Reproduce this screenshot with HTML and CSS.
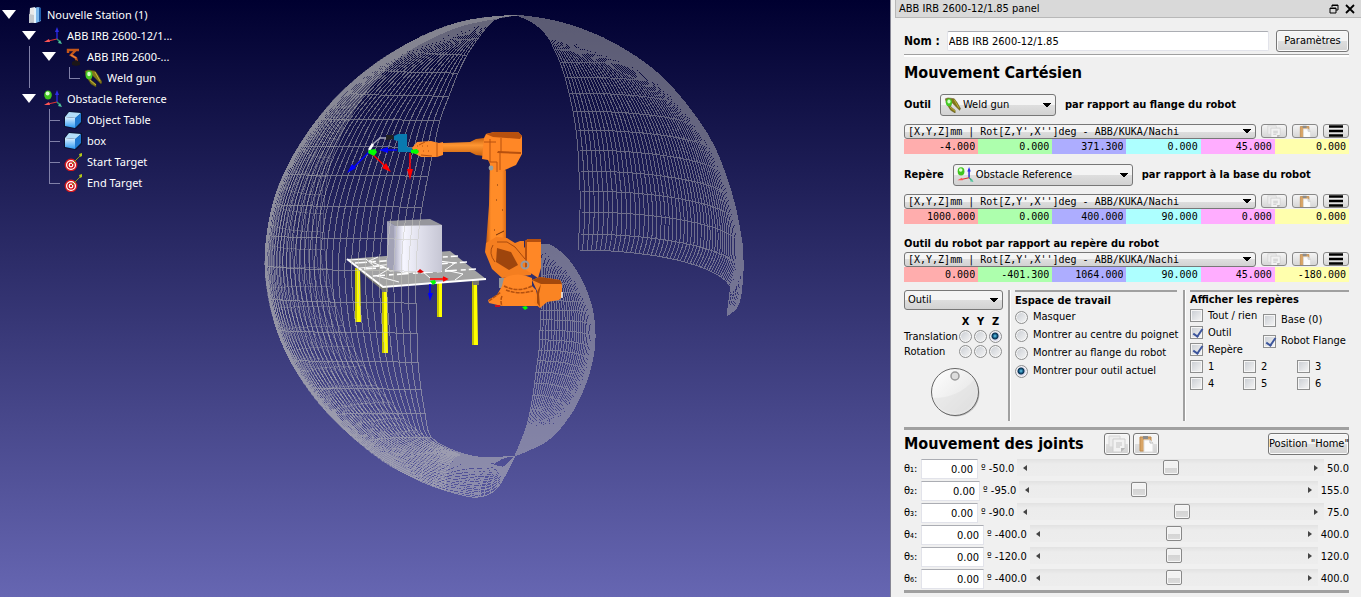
FILE: index.html
```html
<!DOCTYPE html>
<html lang="fr">

<head>
    <meta charset="UTF-8">
    <meta name="viewport" content="width=device-width, initial-scale=1.0">
    <title>Station</title>
    <link rel="stylesheet" href="styles.css">
    <script src="scene.js" defer></script>
</head>

<body>
    <!-- shared icons -->
    <svg class="sprite" aria-hidden="true">
        <defs>
            <linearGradient id="cubeFill" x1="0" y1="0" x2="0" y2="1">
                <stop offset="0" stop-color="#dff2ff" />
                <stop offset="1" stop-color="#2d9bf5" />
            </linearGradient>
            <linearGradient id="dialFill" x1="0" y1="0" x2="1" y2="1">
                <stop offset="0" stop-color="#fff" />
                <stop offset="1" stop-color="#dedede" />
            </linearGradient>
            <linearGradient id="boxFill" x1="0" y1="0" x2="1" y2="0">
                <stop offset="0" stop-color="#aeaec4" />
                <stop offset=".2" stop-color="#f6f6ff" />
                <stop offset=".5" stop-color="#e2e2ee" />
                <stop offset="1" stop-color="#c6c6d4" />
            </linearGradient>
            <linearGradient id="armFill" x1="0" y1="0" x2="1" y2="0">
                <stop offset="0" stop-color="#c05a12" />
                <stop offset=".25" stop-color="#ff8c28" />
                <stop offset=".8" stop-color="#ff8c28" />
                <stop offset="1" stop-color="#d96c18" />
            </linearGradient>
            <linearGradient id="foreFill" x1="0" y1="0" x2="0" y2="1">
                <stop offset="0" stop-color="#c9620f" />
                <stop offset=".4" stop-color="#ff9632" />
                <stop offset="1" stop-color="#c9620f" />
            </linearGradient>
        </defs>
        <symbol id="station" viewBox="0 0 18 18">
            <path d="M6 2l5-1v15l-6 1z" fill="#e8e8e8" />
            <path d="M5 8l5 1v8l-5-1z" fill="#c4c8cc" />
            <path d="M10 2l4-1 3 1v13l-5 2h-2z" fill="#7db8ec" />
            <path d="M10 2l2 0v15h-2z" fill="#e3f2fc" />
            <path d="M15 2l2 0v12l-2 2z" fill="#1d5ba8" />
        </symbol>
        <symbol id="frame" viewBox="0 0 18 18">
            <path d="M13 12V3" stroke="#2424c8" stroke-width="1.6" />
            <path d="M13 0l2 5h-4z" fill="#2d2de6" />
            <path d="M13 12L4 14" stroke="#d33" stroke-width="1.2" />
            <path d="M0 15l5-3 1 3z" fill="#f55" />
            <path d="M13 12l3 3" stroke="#2a9a70" stroke-width="1.4" />
            <path d="M18 17l-4-1 2-3z" fill="#4fc49b" />
        </symbol>
        <symbol id="ball" viewBox="0 0 18 18">
            <ellipse cx="4" cy="5" rx="3.8" ry="4.6" fill="#3fc51e" />
            <ellipse cx="3.6" cy="3.4" rx="2" ry="2" fill="#dcffd0" />
        </symbol>
        <symbol id="robot" viewBox="0 0 18 18">
            <path d="M4 5V2h11M12 2L7 7l5 3 1 4" fill="none" stroke="#c4561a" stroke-width="2.4" />
            <path d="M7 7l5 3" fill="none" stroke="#ef8740" stroke-width="1.2" />
            <path d="M8 14l4-2 4 2v3l-4 1-4-1z" fill="#1b1618" />
        </symbol>
        <symbol id="gun" viewBox="0 0 18 18">
            <path d="M1 2l3-1 7 1 3 4 4 7-1 2-6-6-3-3-1 5 5 4v3l-5-3-5-8z" fill="#80751a" stroke="#4f4810" stroke-width=".5" />
            <path d="M11 3l5 9M6 11l6 5" stroke="#c4b63a" stroke-width="1" />
            <ellipse cx="5" cy="6" rx="3.4" ry="4.4" fill="#43cb25" />
            <ellipse cx="5" cy="5" rx="1.8" ry="2.2" fill="#d6ffc9" />
        </symbol>
        <symbol id="cube" viewBox="0 0 18 18">
            <path d="M5 0l13 1v11l-6 6-12-2V6z" fill="#0b1230" />
            <path d="M5 1l12 1-5 5L1 6z" fill="#b4def9" />
            <path d="M1 6l10 1v10L1 15z" fill="url(#cubeFill)" />
            <path d="M17 2v9l-6 6V7z" fill="#2079cf" />
        </symbol>
        <symbol id="target" viewBox="0 0 18 18">
            <circle cx="7" cy="12" r="6.4" fill="#d3181e" />
            <circle cx="7" cy="12" r="4.4" fill="none" stroke="#fff" stroke-width="1.2" />
            <circle cx="7" cy="12" r="1.8" fill="none" stroke="#fff" stroke-width="1.2" />
            <path d="M8 11l8-8" stroke="#8b9c18" stroke-width="1" />
            <path d="M15 1l3-1v3l-2 1z" fill="#b3c719" />
        </symbol>
        <symbol id="copy" viewBox="0 0 20 18">
            <path d="M2 1h11v11H2z" fill="#ececec" stroke="#d6d6d6" />
            <path d="M6 4h12v9l-4 4H6z" fill="#f2f2f2" stroke="#cfcfcf" />
            <path d="M9 8h6M9 10h6M9 12h4" stroke="#c4c4c4" />
            <path d="M18 13l-4 4v-4z" fill="#b8b8b8" />
        </symbol>
        <symbol id="paste" viewBox="0 0 20 18">
            <path d="M4 2h11v14H4z" fill="#d9a566" stroke="#bd894c" />
            <path d="M7 1h5v3H7z" fill="#8c8c8c" />
            <path d="M8 5h6l3 3v9H8z" fill="#fcfcfc" stroke="#ddd" />
            <path d="M14 5v3h3" fill="none" stroke="#bbb" />
        </symbol>
        <symbol id="bars" viewBox="0 0 14 12">
            <path d="M0 1.500h14M0 6h14M0 10.500h14" stroke="#000" stroke-width="2.6" />
        </symbol>
        <symbol id="caret" viewBox="0 0 14 9">
            <path d="M0 0h14L7 9z" fill="#fff" />
        </symbol>
    </svg>

    <div class="app">
        <main class="view">
            <!-- 3D view -->
            <svg class="scene" viewBox="0 0 890 597" preserveAspectRatio="xMidYMid meet" role="img" aria-label="Robot">
                <path id="meshRight" class="mesh" />
                <path id="meshInner" class="mesh mesh-inner" />
                <path id="meshBack" class="mesh mesh-back" />

                <!-- table -->
                <g class="table3d">
                    <path d="M355 268h5l1 54h-6zM382 290h5l1 63h-6zM437 282h5v35h-5zM472 281h5l1 64h-6z" fill="#ff0" />
                    <path d="M356 268v54M383 290v63M438 282v35M473 281v64" stroke="#8d8d00" fill="none" />
                    <path d="M381 286h7v6h-6zM472 280h7v5h-6zM349 262l33 25v3z" fill="#77776f" />
                    <path d="M347 259l103-8 36 28-103 8z" fill="#a3a3a3" />
                    <path d="M355 263l103-7M364 269l103-7M373 276l103-7" stroke="#fff" stroke-dasharray="12 4 5 3" stroke-width="1.6" />
                    <path d="M348 260l18-1 8 7 20-2 8 9 20-2 8 7M378 257l-9 4 20 8-12 7 22 6M440 253l-9 7 24 3-10 7 18 4-8 6M360 268l22-2 8 5 25-2" stroke="#fff" fill="none" />
                    <path d="M347 259l36 28 103-8" stroke="#fff" fill="none" stroke-width="2" />
                </g>
                <!-- box -->
                <path d="M387 221l43-2 12 6-45 2z" fill="#96969c" />
                <path d="M387 221l9 5v46l-9-5z" fill="#a2a2b6" />
                <path d="M394 226l48-1v44l-1 3h-38l-9-1z" fill="url(#boxFill)" />

                <path id="meshLeft" class="mesh mesh-left" />

                <!-- robot arm -->
                <g>
                    <path d="M490 158l11 5 5 8v69l-4 10-16-5 3-40z" fill="url(#armFill)" />
                    <path d="M443 143l27-1 6-3 8-1v18l-8-1-6-3h-27z" fill="url(#foreFill)" />
                    <path d="M484 138l2-4 8-2h24l4 4v18l-6 11-16 7-8-4-4-8-6-1z" fill="#ff8726" />
                    <path d="M486 134l8-2h24l4 4-2 3-27-2zM498 151l23 1v2l-24-1z" fill="#b7500e" />
                    <path d="M501 138v14M490 139v23M484 142h12M489 162h8v10M500 152v18" stroke="#b7500e" fill="none" />
                    <path d="M412 148l5-6 14-1 8 2 4-1v13l-6 2h-16l-7-4z" fill="#ff8d2d" />
                    <path d="M437 143v14M425 142l-6 3M421 155l11 1" stroke="#b7500e" fill="none" />
                    <path d="M417 146h11M418 151h11" stroke="#b7500e" stroke-dasharray="1 4" fill="none" />
                    <path d="M497 185h1M496 200h1M502 210h1M494 230h1M496 235l8-4" stroke="#70300a" fill="none" />
                    <circle cx="491" cy="168" r="2.400" fill="#92a0a5" />

                    <path d="M486 243l10-6 11 1 8 5 5-2h4v6l9 8-2 20-29 3-10-9-7-17z" fill="#f47e20" />
                    <path d="M497 248l14 4 7 13-9 5-13-8z" fill="#9e450d" />
                    <path d="M493 245q-5 8 2 17M497 242l10 0 8 5 10 12" stroke="#a94a0d" fill="none" />
                    <path d="M525 241l3-2h12l1 2v27l-3 10-12-8z" fill="#ff8726" />
                    <path d="M525 241l3-2h13v3h-14v26h-2z" fill="#b7500e" />
                    <path d="M499 278h5v10h-5z" fill="#90949a" />
                    <path d="M504 278q14-7 28 0v8l4 4 2 16h-36l-13-3-1-3 9-5 5-9z" fill="#ff8726" />
                    <path d="M504 286q14 7 28 0M506 290q12 5 27 1M489 301l12-9M502 296q-2 5 0 10" stroke="#b3500f" stroke-width="1.5" stroke-dasharray="4 1" fill="none" />
                    <path d="M532 280l8-3 20 3 2 5v12l-3 3-12 2-7 6-6-5 3-12z" fill="#fa8423" />
                    <path d="M532 280l8-3 20 3 2 4-21 0zM541 284l-4 8v11l3 4-1-13z" fill="#a4480c" />
                    <circle cx="525" cy="265" r="3.500" fill="none" stroke="#969aa0" stroke-width="2" />
                    <path d="M562 292v6" stroke="#eee" stroke-width="1.500" />
                </g>

                <!-- welding tool -->
                <path d="M370 150l3-6 7-6h7" stroke="#a8a8bc" stroke-width="1.500" fill="none" />
                <path d="M369 150l4-6" stroke="#fff" stroke-width="2.500" />
                <path d="M386 135h7l1 4-8 1z" fill="#222" />
                <path d="M394 136l4-2h9v13l5 1v4h-14v-11l-4-1z" fill="#097ab0" />

                <!-- frames -->
                <g stroke-width="1.500">
                    <path d="M369 152l-18 18M397 150h-11" stroke="#00f" />
                    <path d="M347 173l5-9 4 4zM379 150l9-3v6z" fill="#00f" />
                    <path d="M370 152l16 15M410 153v18" stroke="#f00" />
                    <path d="M391 172l-9-4 4-5zM410 180l-3-11h6z" fill="#f00" />
                    <path d="M369 150l6-1 2 3-3 4-6-3zM411 150l6-1 2 3-2 2-6-1zM430 281l5-1 1 3-3 2zM522 307l4-1 2 2-3 2z" fill="#0f0" />
                    <path d="M430 279h16M443 277l4 2-4 2M495 306h5" stroke="#f00" fill="#f00" />
                    <path d="M417 272l3-3 4 3-3 1z" fill="#d00" />
                    <path d="M430 284v12" stroke="#00f" />
                    <path d="M430 301l-2-8h5z" fill="#00f" />
                </g>
            </svg>

            <!-- station tree -->
            <ul class="tree">
                <li>
                    <div class="node"><svg class="caret"><use href="#caret" /></svg><svg class="icon"><use href="#station" /></svg><span>Nouvelle Station (1)</span></div>
                    <ul>
                        <li class="open">
                            <div class="node"><svg class="caret"><use href="#caret" /></svg><svg class="icon"><use href="#frame" /></svg><span>ABB IRB 2600-12/1...</span></div>
                            <ul>
                                <li>
                                    <div class="node"><svg class="caret"><use href="#caret" /></svg><svg class="icon"><use href="#robot" /></svg><span>ABB IRB 2600-...</span></div>
                                    <ul>
                                        <li class="leaf">
                                            <div class="node"><svg class="icon"><use href="#gun" /></svg><span>Weld gun</span></div>
                                        </li>
                                    </ul>
                                </li>
                            </ul>
                        </li>
                        <li>
                            <div class="node"><svg class="caret"><use href="#caret" /></svg><svg class="icon"><use href="#frame" /><use href="#ball" /></svg><span>Obstacle Reference</span></div>
                            <ul>
                                <li class="leaf"><div class="node"><svg class="icon"><use href="#cube" /></svg><span>Object Table</span></div></li>
                                <li class="leaf"><div class="node"><svg class="icon"><use href="#cube" /></svg><span>box</span></div></li>
                                <li class="leaf"><div class="node"><svg class="icon"><use href="#target" /></svg><span>Start Target</span></div></li>
                                <li class="leaf"><div class="node"><svg class="icon"><use href="#target" /></svg><span>End Target</span></div></li>
                            </ul>
                        </li>
                    </ul>
                </li>
            </ul>
        </main>

        <aside class="panel">
            <header class="title">
                <span>ABB IRB 2600-12/1.85 panel</span>
                <button type="button" aria-label="Détacher"><svg viewBox="0 0 10 10"><path d="M3 3V1h6v5H7M3 1.500h6M1 4h6v5H1zM1 4.500h6" fill="none" stroke="#000" /></svg></button>
                <button type="button" aria-label="Fermer"><svg viewBox="0 0 10 10"><path d="M1 1l8 8M9 1L1 9" stroke="#000" stroke-width="1.800" /></svg></button>
            </header>

            <div class="content">
                <div class="name-row">
                    <label class="strong" for="nom">Nom :</label>
                    <input id="nom" class="name" type="text" value="ABB IRB 2600-12/1.85">
                    <button class="btn" type="button">Paramètres</button>
                </div>

                <h2 class="cartesian">Mouvement Cartésien</h2>

                <div class="ref-row">
                    <label for="outil">Outil</label>
                    <span class="combo tool"><svg class="icon"><use href="#gun" /></svg><select id="outil"><option>Weld gun</option></select></span>
                    <span class="about">par rapport au flange du robot</span>
                </div>
                <div class="pose">
                    <div class="pose-head">
                        <select aria-label="Format outil"><option>[X,Y,Z]mm | Rot[Z,Y',X'']deg - ABB/KUKA/Nachi</option></select>
                        <button type="button" aria-label="Copier"><svg><use href="#copy" /></svg></button>
                        <button type="button" aria-label="Coller"><svg><use href="#paste" /></svg></button>
                        <button type="button" aria-label="Menu"><svg class="bars"><use href="#bars" /></svg></button>
                    </div>
                    <div class="values">
                        <input aria-label="X" value="-4.000"><input aria-label="Y" value="0.000"><input aria-label="Z" value="371.300"><input aria-label="Rot Z" value="0.000"><input aria-label="Rot Y" value="45.000"><input aria-label="Rot X" value="0.000">
                    </div>
                </div>

                <div class="ref-row">
                    <label for="repere">Repère</label>
                    <span class="combo reference"><svg class="icon"><use href="#frame" /><use href="#ball" /></svg><select id="repere"><option>Obstacle Reference</option></select></span>
                    <span class="about">par rapport à la base du robot</span>
                </div>
                <div class="pose">
                    <div class="pose-head">
                        <select aria-label="Format repère"><option>[X,Y,Z]mm | Rot[Z,Y',X'']deg - ABB/KUKA/Nachi</option></select>
                        <button type="button" aria-label="Copier"><svg><use href="#copy" /></svg></button>
                        <button type="button" aria-label="Coller"><svg><use href="#paste" /></svg></button>
                        <button type="button" aria-label="Menu"><svg class="bars"><use href="#bars" /></svg></button>
                    </div>
                    <div class="values">
                        <input aria-label="X" value="1000.000"><input aria-label="Y" value="0.000"><input aria-label="Z" value="400.000"><input aria-label="Rot Z" value="90.000"><input aria-label="Rot Y" value="0.000"><input aria-label="Rot X" value="0.000">
                    </div>
                </div>

                <h3 class="relative">Outil du robot par rapport au repère du robot</h3>
                <div class="pose">
                    <div class="pose-head">
                        <select aria-label="Format robot"><option>[X,Y,Z]mm | Rot[Z,Y',X'']deg - ABB/KUKA/Nachi</option></select>
                        <button type="button" aria-label="Copier"><svg><use href="#copy" /></svg></button>
                        <button type="button" aria-label="Coller"><svg><use href="#paste" /></svg></button>
                        <button type="button" aria-label="Menu"><svg class="bars"><use href="#bars" /></svg></button>
                    </div>
                    <div class="values">
                        <input aria-label="X" value="0.000"><input aria-label="Y" value="-401.300"><input aria-label="Z" value="1064.000"><input aria-label="Rot Z" value="90.000"><input aria-label="Rot Y" value="45.000"><input aria-label="Rot X" value="-180.000">
                    </div>
                </div>

                <div class="options">
                    <div class="jog">
                        <select aria-label="Déplacer"><option>Outil</option></select>
                        <div class="axes">
                            <span></span><b>X</b><b>Y</b><b>Z</b>
                            <span>Translation</span>
                            <input type="radio" name="axis" aria-label="Translation X"><input type="radio" name="axis" aria-label="Translation Y"><input type="radio" name="axis" aria-label="Translation Z" checked>
                            <span>Rotation</span>
                            <input type="radio" name="axis" aria-label="Rotation X"><input type="radio" name="axis" aria-label="Rotation Y"><input type="radio" name="axis" aria-label="Rotation Z">
                        </div>
                        <svg class="dial" viewBox="0 0 50 50">
                            <circle cx="26" cy="26" r="23.500" fill="#bbb" />
                            <circle cx="25" cy="25" r="23.500" fill="url(#dialFill)" stroke="#666" />
                            <path d="M3 31Q28 31 44 13A22 22 0 0 1 4 34z" fill="#ddd" opacity=".4" />
                            <circle cx="25" cy="9" r="4" fill="#ddd" stroke="#999" stroke-width="1.500" />
                        </svg>
                    </div>
                    <fieldset class="workspace">
                        <legend>Espace de travail</legend>
                        <label><input type="radio" name="space">Masquer</label>
                        <label><input type="radio" name="space">Montrer au centre du poignet</label>
                        <label><input type="radio" name="space">Montrer au flange du robot</label>
                        <label><input type="radio" name="space" checked>Montrer pour outil actuel</label>
                    </fieldset>
                    <fieldset class="frames">
                        <legend>Afficher les repères</legend>
                        <div class="named">
                            <div>
                                <label><input type="checkbox">Tout / rien</label>
                                <label><input type="checkbox" checked>Outil</label>
                                <label><input type="checkbox" checked>Repère</label>
                            </div>
                            <div class="bases">
                                <label><input type="checkbox">Base (0)</label>
                                <label><input type="checkbox" checked>Robot Flange</label>
                            </div>
                        </div>
                        <div class="numbered">
                            <label><input type="checkbox">1</label><label><input type="checkbox">2</label><label><input type="checkbox">3</label>
                            <label><input type="checkbox">4</label><label><input type="checkbox">5</label><label><input type="checkbox">6</label>
                        </div>
                    </fieldset>
                </div>

                <section class="joints">
                    <div class="joints-head">
                        <h2>Mouvement des joints</h2>
                        <button class="btn square" type="button" aria-label="Copier"><svg><use href="#copy" /></svg></button>
                        <button class="btn square" type="button" aria-label="Coller"><svg><use href="#paste" /></svg></button>
                        <button class="btn home" type="button">Position "Home"</button>
                    </div>
                    <div class="joint"><label for="j1">θ₁:</label><input id="j1" class="angle" value="0.00"><span>º -50.0</span><div class="slider"><input type="range" min="-50" max="50" value="0" aria-label="θ₁"></div><span>50.0</span></div>
                    <div class="joint"><label for="j2">θ₂:</label><input id="j2" class="angle mid" value="0.00"><span>º -95.0</span><div class="slider"><input type="range" min="-95" max="155" value="0" aria-label="θ₂"></div><span>155.0</span></div>
                    <div class="joint"><label for="j3">θ₃:</label><input id="j3" class="angle" value="0.00"><span>º -90.0</span><div class="slider"><input type="range" min="-90" max="75" value="0" aria-label="θ₃"></div><span>75.0</span></div>
                    <div class="joint"><label for="j4">θ₄:</label><input id="j4" class="angle wide" value="0.00"><span>º -400.0</span><div class="slider"><input type="range" min="-400" max="400" value="0" aria-label="θ₄"></div><span>400.0</span></div>
                    <div class="joint"><label for="j5">θ₅:</label><input id="j5" class="angle wide" value="0.00"><span>º -120.0</span><div class="slider"><input type="range" min="-120" max="120" value="0" aria-label="θ₅"></div><span>120.0</span></div>
                    <div class="joint"><label for="j6">θ₆:</label><input id="j6" class="angle wide" value="0.00"><span>º -400.0</span><div class="slider"><input type="range" min="-400" max="400" value="0" aria-label="θ₆"></div><span>400.0</span></div>
                </section>
            </div>
        </aside>
    </div>
</body>

</html>
```

FILE: styles.css
```css
* {
    box-sizing: border-box;
    margin: 0;
    padding: 0;
}

body {
    font-family: "DejaVu Sans Condensed", "Open Sans", sans-serif;
    font-size: 11px;
    line-height: 14px;
    color: #000;
}

input,
select,
button {
    font: inherit;
    color: inherit;
}

ul {
    list-style: none;
}

.sprite {
    position: absolute;
    width: 0;
    height: 0;
}

.app {
    display: flex;
    min-height: 100vh;
}

/* 3D view */
.view {
    flex: 1;
    min-width: 0;
    display: grid;
    background: linear-gradient(#000030, #6666b2);
}

.scene {
    grid-area: 1 / 1;
    width: 100%;
    height: 100%;
}

.mesh {
    fill: none;
    stroke: #c8c8c0;
    stroke-opacity: 0.45;
    stroke-width: 1;
    shape-rendering: crispEdges;
}

.mesh-left {
    stroke-opacity: 0.5;
}

.mesh-back {
    stroke-opacity: 0.3;
}

/* tree */
.tree {
    grid-area: 1 / 1;
    z-index: 1;
    justify-self: start;
    align-self: start;
    padding: 4px 0 0 2px;
    font-family: "Noto Sans", sans-serif;
    color: #fff;
}

.tree ul {
    padding-left: 20px;
}

.tree li {
    position: relative;
}

.node {
    display: flex;
    align-items: center;
    height: 21px;
}

.node .caret {
    width: 14px;
    height: 9px;
    margin-right: 8px;
}

.node .icon {
    width: 18px;
    height: 18px;
    margin-right: 5px;
}

.leaf .node {
    padding-left: 22px;
}

.leaf::before {
    content: "";
    position: absolute;
    left: 7px;
    top: 0;
    width: 10px;
    height: 11px;
    border: solid #8080a8;
    border-width: 0 0 1px 1px;
}

.leaf:not(:last-child)::after,
.open::after {
    content: "";
    position: absolute;
    left: 7px;
    top: 0;
    bottom: 0;
    width: 1px;
    background: #8080a8;
}

.open::after {
    top: 21px;
}

/* panel */
.panel {
    width: 471px;
    background: #f0f0f0;
    border-left: 1px solid #868694;
    padding-left: 4px;
}

.title {
    display: flex;
    align-items: center;
    gap: 5px;
    height: 18px;
    padding: 1px 5px 0 3px;
    background: #d9d9d9;
    border: solid #b8b8b8;
    border-width: 0 0 1px 1px;
}

.title span {
    flex: 1;
}

.title button {
    width: 11px;
    height: 12px;
    border: 0;
    background: none;
}

.title svg {
    display: block;
    width: 10px;
    height: 10px;
}

.content {
    padding: 12px 12px 0 9px;
}

.btn {
    height: 22px;
    border: 1px solid #777;
    border-radius: 3px;
    background: linear-gradient(#f4f4f4 50%, #dedede 50%, #d2d2d2);
    box-shadow: inset 0 0 0 1px #fafafa;
    white-space: nowrap;
}

.name-row {
    display: flex;
    align-items: center;
    gap: 7px;
    padding-bottom: 2px;
    border-bottom: 1px solid #a0a0a0;
    box-shadow: 0 2px #fff;
}

.name-row .btn {
    width: 73px;
}

.strong {
    font-size: 12px;
    font-weight: bold;
}

.name {
    flex: 1;
    min-width: 0;
    height: 20px;
    padding: 0 1px;
    border: 1px solid #e2e3ea;
    border-top-color: #abadb3;
    border-radius: 2px;
    background: #fff;
}

h2 {
    font-size: 16px;
    line-height: 20px;
}

.cartesian {
    margin: 8px 0 11px;
}

select {
    appearance: none;
    width: 100%;
    padding: 0 14px 0 3px;
    border: 1px solid #777;
    border-radius: 3px;
    background:
        linear-gradient(to bottom right, #000 50%, transparent 50%) right 4px center / 4px 5px no-repeat,
        linear-gradient(to bottom left, #000 50%, transparent 50%) right 8px center / 4px 5px no-repeat,
        linear-gradient(#f4f4f4 50%, #dedede 50%, #d2d2d2);
    overflow: hidden;
}

.ref-row {
    display: flex;
    align-items: center;
    gap: 9px;
    height: 22px;
    font-weight: bold;
}

.combo {
    position: relative;
    font-weight: normal;
}

.combo.tool {
    width: 116px;
}

.combo.reference {
    width: 180px;
}

.combo select {
    height: 22px;
    padding-left: 22px;
}

.combo .icon {
    position: absolute;
    left: 4px;
    top: 3px;
    width: 17px;
    height: 16px;
}

.pose {
    margin: 8px 0 10px;
}

.pose-head {
    display: flex;
    gap: 5px;
    height: 15px;
}

.pose-head select {
    flex: 1;
    min-width: 0;
    height: 15px;
    line-height: 13px;
    font-family: "DejaVu Sans Mono", monospace;
    font-size: 10px;
}

.pose-head button {
    width: 26px;
    height: 14px;
    border: 1px solid #888;
    border-radius: 3px;
    background: linear-gradient(#f4f4f4, #d6d6d6);
    overflow: hidden;
}

.pose-head svg {
    display: block;
    width: 20px;
    height: 14px;
    margin: 0 auto;
}

.pose-head .bars {
    width: 14px;
    height: 12px;
}

.values {
    display: grid;
    grid-template-columns: repeat(6, 1fr);
}

.values input {
    min-width: 0;
    height: 15px;
    padding-right: 3px;
    border: 0;
    background: #ffadad;
    font-family: "DejaVu Sans Mono", monospace;
    font-size: 10px;
    text-align: right;
}

.values input:nth-child(2) {
    background: #adffad;
}

.values input:nth-child(3) {
    background: #adadff;
}

.values input:nth-child(4) {
    background: #adffff;
}

.values input:nth-child(5) {
    background: #ffadff;
}

.values input:nth-child(6) {
    background: #ffffad;
}

.relative {
    font-size: 11px;
    margin: 13px 0 -7px;
}

/* jog, workspace, frames */
.options {
    display: flex;
    height: 131px;
    margin-top: -2px;
}

.options select {
    height: 20px;
}

.jog {
    width: 99px;
}

.axes {
    display: grid;
    grid-template-columns: 54px repeat(3, 15px);
    grid-template-rows: 15px 15px 15px;
    align-items: center;
    margin-top: 4px;
}

.axes b {
    text-align: center;
}

input[type="radio"],
input[type="checkbox"] {
    appearance: none;
    flex: none;
    width: 13px;
    height: 13px;
    border: 1px solid #8e8f8f;
    box-shadow: inset 0 0 0 1px #f6f6f6;
    background: linear-gradient(135deg, #c8ccd2, #f6f6f6);
}

input[type="radio"] {
    border-radius: 50%;
}

input[type="radio"]:checked {
    background: radial-gradient(circle at 5px 5px, #6cd0f0 0, #135a85 2px, #0b2f4c 3px, transparent 4px), #dde;
}

input[type="checkbox"]:checked {
    position: relative;
}

input[type="checkbox"]:checked::after {
    content: "";
    position: absolute;
    left: 4px;
    top: 0;
    width: 4px;
    height: 8px;
    border: solid #3c559c;
    border-width: 0 2px 2px 0;
    transform: rotate(35deg);
}

.axes input {
    justify-self: center;
}

.dial {
    display: block;
    width: 50px;
    height: 50px;
    margin: 8px 0 0 26px;
}

fieldset {
    border: solid #a0a0a0;
    border-width: 0 0 0 2px;
    box-shadow: inset 1px 0 #fff;
    padding-left: 5px;
    min-width: 0;
}

.workspace {
    width: 175px;
    margin-left: 5px;
}

.frames {
    flex: 1;
}

legend {
    float: left;
    width: 162px;
    padding-top: 2px;
    border-top: 2px solid #a0a0a0;
    font-weight: bold;
    font-size: 11px;
    line-height: 14px;
}

.frames legend {
    width: 100%;
    padding-top: 1px;
}

fieldset label {
    display: flex;
    align-items: center;
    gap: 5px;
    height: 17px;
    white-space: nowrap;
}

.workspace label {
    clear: both;
    height: 18px;
}

.named {
    clear: both;
    display: flex;
}

.named > div {
    width: 73px;
}

.bases {
    padding-top: 3px;
}

.bases label {
    height: 22px;
}

.bases label:first-child {
    height: 20px;
}

.numbered {
    display: grid;
    grid-template-columns: 53px 54px 1fr;
}

/* joints */
.joints {
    margin-top: 6px;
    border: solid #a0a0a0;
    border-width: 3px 0;
}

.joints-head {
    display: flex;
    align-items: center;
    gap: 3px;
    height: 28px;
}

.joints-head h2 {
    width: 197px;
}

.square {
    width: 26px;
}

.square svg {
    display: block;
    width: 20px;
    height: 18px;
    margin: 0 auto;
}

.home {
    margin-left: auto;
    width: 81px;
}

.joint {
    display: flex;
    align-items: center;
    gap: 3px;
    height: 22px;
}

.joint label {
    width: 14px;
    white-space: nowrap;
}

.angle {
    width: 57px;
    height: 20px;
    padding-right: 4px;
    border: 1px solid #e2e3ea;
    border-top-color: #abadb3;
    background: #fff;
    text-align: right;
}

.angle.mid {
    width: 59px;
}

.angle.wide {
    width: 63px;
}

.slider {
    flex: 1;
    min-width: 0;
    height: 17px;
    margin-bottom: 3px;
    display: flex;
    align-items: center;
    background: linear-gradient(#e2e2e2, #ececec 30%, #ededed);
}

.slider::before,
.slider::after {
    content: "";
    margin: 0 7px 0 6px;
    border: solid transparent;
    border-width: 3px 4px 3px 0;
    border-right-color: #444;
}

.slider::after {
    margin: 0 6px 0 7px;
    border-width: 3px 0 3px 4px;
    border-left-color: #444;
}

.slider input {
    appearance: none;
    flex: 1;
    min-width: 0;
    height: 16px;
    background: none;
}

.slider input::-webkit-slider-thumb {
    appearance: none;
    width: 16px;
    height: 15px;
    border: 1px solid #888;
    border-radius: 2px;
    background: linear-gradient(#f2f2f2 50%, #d4d4d4 50%, #dcdcdc);
    box-shadow: inset 0 0 0 1px #f6f6f6;
}
```

FILE: scene.js
```js
// reads "x,y x,y ..." into a list of points
function points(text) {
    return text.split(" ").map(function (p) {
        return p.split(",").map(Number);
    });
}

// point at position t (0..1) on a smooth curve through the list
function at(list, t) {
    var n = list.length - 1;
    var i = Math.min(Math.floor(t * n), n - 1);
    var f = t * n - i;
    var a = list[Math.max(i - 1, 0)];
    var b = list[i];
    var c = list[i + 1];
    var d = list[Math.min(i + 2, n)];
    return [0, 1].map(function (k) {
        return 0.5 * (2 * b[k] + (c[k] - a[k]) * f +
            (2 * a[k] - 5 * b[k] + 4 * c[k] - d[k]) * f * f +
            (3 * b[k] - a[k] - 3 * c[k] + d[k]) * f * f * f);
    });
}

// wire mesh between an open edge and the silhouette
function mesh(edge, outline, cols, sub) {
    var d = "";
    var rows = (edge.length - 1) * sub;

    function surface(u, v) {
        var a = at(edge, u);
        var b = at(outline, u);
        var angle = v * Math.PI / 2;
        return (a[0] + (b[0] - a[0]) * Math.sin(angle)).toFixed(1) + " " +
            (a[1] + (b[1] - a[1]) * (1 - Math.cos(angle))).toFixed(1);
    }

    for (var c = 0; c <= cols; c++) {
        for (var i = 0; i <= 60; i++) {
            d += (i ? "L" : "M") + surface(i / 60, c / cols);
        }
    }
    for (var r = 0; r <= rows; r++) {
        for (var j = 0; j <= 20; j++) {
            d += (j ? "L" : "M") + surface(r / rows, j / 20);
        }
    }
    return d;
}

var leftEdge = points("517,15 494,20 477,40 467,55 458,73 449,96 440,120 434,147 428,176 422,207 418,239 416,271 416,303 417,333 418,362 421,389 425,413 431,437 455,451 485,458 514,456");
var leftOutline = points("517,15 470,20 434,31 402,47 370,68 342,92 318,119 299,146 284,174 273,204 267,235 265,265 269,298 277,330 290,360 308,388 330,415 360,443 395,468 435,487 480,497");

// far side of the shell seen through the left part
var backEdge = points("517,15 455,27 405,52 371,86 348,121 332,158 325,195 324,232 327,268 336,306 352,346 376,385 404,418 431,441 460,455");
var backOutline = points("517,15 465,21 413,41 368,69 330,104 300,145 280,183 269,222 265,265 271,310 287,354 313,396 348,433 392,467 445,490");

var rightEdge = points("517,15 535,24 548,37 554,49 560,62 565,77 569,93 573,111 576,130 578,150 579,171 580,191 580,212 579,234 578,250");
var rightOutline = points("517,15 555,21 592,33 622,48 650,67 672,88 690,110 706,133 718,156 727,180 734,203 739,226 742,248 741,273 732,293");

var innerEdge = points("540,244 541,258 541,275 541,292 541,310 540,330 539,350 536,372 533,395 527,425 515,456");
var innerOutline = points("552,246 565,256 577,272 587,292 593,313 595,338 592,362 584,388 570,415 548,440 515,456");

// tail of the shell at the far right, and the twisted end at the bottom
var tailEdge = points("741,240 731,287 729,300 727,316");
var tailOutline = points("742,245 743,270 739,303 727,316");
var foldEdge = points("455,451 480,461 502,467 508,465 515,456");
var foldOutline = points("435,487 458,494 478,497 497,488 515,456");

document.getElementById("meshLeft").setAttribute("d",
    mesh(leftEdge, leftOutline, 32, 1) + mesh(foldEdge, foldOutline, 14, 3));
document.getElementById("meshBack").setAttribute("d",
    mesh(backEdge, backOutline, 22, 2));
document.getElementById("meshRight").setAttribute("d",
    mesh(rightEdge, rightOutline, 54, 1) + mesh(tailEdge, tailOutline, 8, 3));
document.getElementById("meshInner").setAttribute("d",
    mesh(innerEdge, innerOutline, 30, 2));
```
